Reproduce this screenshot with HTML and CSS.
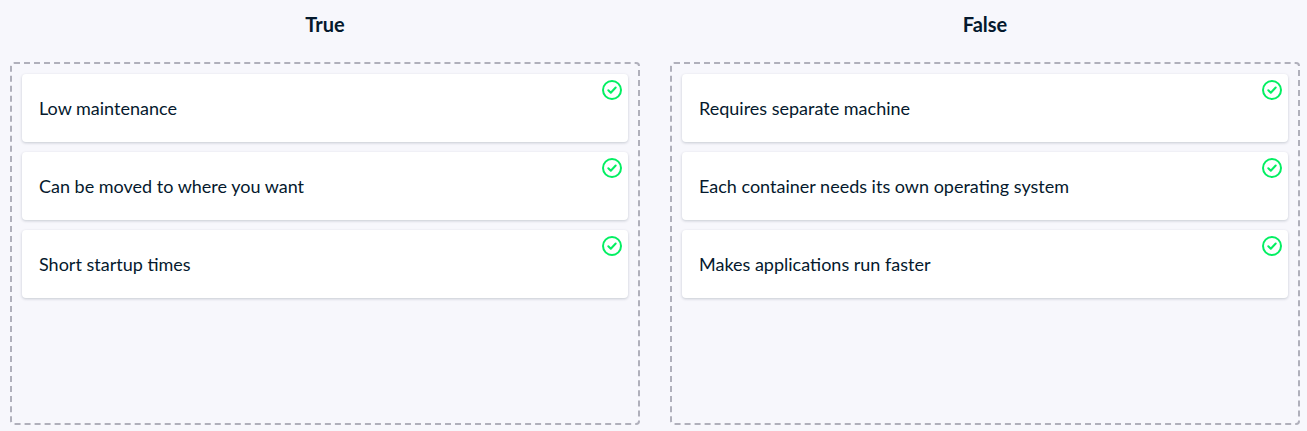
FILE: index.html
```html
<!DOCTYPE html>
<html lang="en">
<head>
<meta charset="utf-8">
<title>True or false</title>
<link rel="stylesheet" href="styles.css">
</head>
<body>
<svg class="defs" width="0" height="0"><symbol id="check" viewBox="0 0 20 20"><circle cx="10" cy="10" r="9"/><path d="M6.3 10.2l2.5 2.5 4.9-5.2"/></symbol></svg>
<main class="board">
  <section class="column">
    <h2 class="title"><span class="w-true">True</span></h2>
    <div class="zone">
      <div class="card"><span class="t1">Low maintenance</span><svg class="icon"><use href="#check"/></svg></div>
      <div class="card"><span class="t2">Can be moved to where you want</span><svg class="icon"><use href="#check"/></svg></div>
      <div class="card"><span class="t3">Short startup times</span><svg class="icon"><use href="#check"/></svg></div>
    </div>
  </section>
  <section class="column">
    <h2 class="title"><span class="w-false">False</span></h2>
    <div class="zone">
      <div class="card"><span class="t4">Requires separate machine</span><svg class="icon"><use href="#check"/></svg></div>
      <div class="card"><span class="t5">Each container needs its own operating system</span><svg class="icon"><use href="#check"/></svg></div>
      <div class="card"><span class="t6">Makes applications run faster</span><svg class="icon"><use href="#check"/></svg></div>
    </div>
  </section>
</main>
</body>
</html>
```
FILE: styles.css
```css
* { box-sizing: border-box; }
body { margin: 0; height: 431px; overflow: hidden; background: #f7f7fc; color: #05192d; font-family: Lato, sans-serif; }
.defs { position: absolute; }
.board { display: grid; grid-template-columns: 630px 630px; column-gap: 30px; padding: 0 10px; }
.title { margin: 0; height: 62px; padding-top: 12px; text-align: center; font-size: 20px; line-height: 24px; font-weight: 700; }
.zone { height: 363px; border: 2px dashed #b0b0bb; border-radius: 4px; padding: 10px; display: flex; flex-direction: column; gap: 10px; }
.card { position: relative; height: 68px; display: flex; align-items: center; padding: 0 17px; background: #fff; border-radius: 4px; box-shadow: 0 1px 3px rgba(5,25,45,.2); font-size: 18px; line-height: 24px; white-space: nowrap; }
.icon { position: absolute; top: 6px; right: 6px; width: 20px; height: 20px; fill: none; stroke: #03ef62; stroke-width: 2; stroke-linecap: round; stroke-linejoin: round; }
```
